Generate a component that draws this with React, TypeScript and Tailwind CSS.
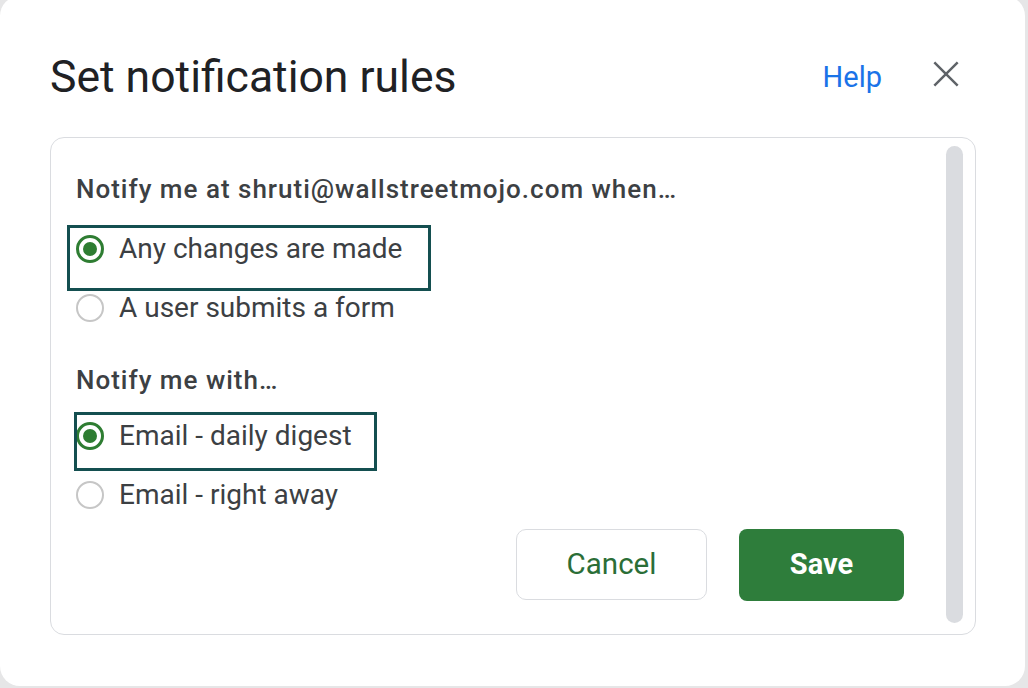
import React from "react";

function Radio({ checked }: { checked?: boolean }) {
  if (checked) {
    return (
      <span className="flex h-[28px] w-[28px] shrink-0 items-center justify-center rounded-full border-[3px] border-[#2e7d32]">
        <span className="h-[14px] w-[14px] rounded-full bg-[#2e7d32]" />
      </span>
    );
  }
  return <span className="h-[28px] w-[28px] shrink-0 rounded-full border-2 border-[#c6c6c6]" />;
}

function Option({
  label,
  checked,
  children,
}: {
  label: string;
  checked?: boolean;
  children?: React.ReactNode;
}) {
  return (
    <label className="relative flex h-[59px] items-center gap-[15px]">
      <Radio checked={checked} />
      <span className="text-[28px] leading-[40px] text-[#3c4043]">{label}</span>
      {children}
    </label>
  );
}

export default function App() {
  return (
    <div className="h-[688px] w-[1028px] overflow-hidden bg-[#e6e6e7] font-['Roboto',sans-serif]">
      <div className="-mt-[4px] h-[690px] w-[1025px] rounded-[20px] bg-white pl-[50px] pr-[49px] pt-[55px]">
        {/* Header */}
        <div className="flex items-start pr-[10px]">
          <h1 className="flex-1 text-[44.5px] font-normal leading-[52px] text-[#202124]">
            Set notification rules
          </h1>
          <a href="#" className="text-[29px] leading-[52px] text-[#1a73e8]">
            Help
          </a>
          <button className="ml-[44px] flex h-[46px] w-[40px] items-center justify-center text-[#5f6368]">
            <svg width="40" height="40" viewBox="0 0 24 24" fill="none" stroke="currentColor" strokeWidth="1.5">
              <path d="M5 5L19 19M19 5L5 19" />
            </svg>
          </button>
        </div>

        {/* Rules box */}
        <div className="mt-[34px] flex h-[498px] rounded-[14px] border border-[#dadce0]">
          <div className="flex-1 pl-[25px] pt-[36px]">
            <p className="text-[26px] font-medium leading-[30px] tracking-[1px] text-[#3c4043]">
              Notify me at shruti@wallstreetmojo.com when…
            </p>
            <div className="mt-[15px]">
              <Option label="Any changes are made" checked>
                <span className="absolute left-[-9px] top-[6px] h-[66px] w-[364px] border-[3px] border-[#144f50]" />
              </Option>
              <Option label="A user submits a form" />
            </div>

            <p className="mt-[28px] text-[26px] font-medium leading-[30px] tracking-[1px] text-[#3c4043]">
              Notify me with…
            </p>
            <div className="mt-[11px]">
              <Option label="Email - daily digest" checked>
                <span className="absolute left-[-2px] top-[6px] h-[59px] w-[303px] border-[3px] border-[#144f50]" />
              </Option>
              <Option label="Email - right away" />
            </div>

            {/* Buttons */}
            <div className="mr-[42px] mt-[5px] flex justify-end gap-[32px]">
              <button className="h-[71px] w-[191px] rounded-[10px] border-[1.5px] border-[#dadce0] text-[29.5px] text-[#2b6e37]">
                Cancel
              </button>
              <button className="h-[72px] w-[165px] rounded-[8px] bg-[#2e7d3b] text-[29px] font-bold text-white">
                Save
              </button>
            </div>
          </div>
          {/* Scrollbar */}
          <div className="mb-[11px] mr-[12px] mt-[8px] w-[17px] rounded-full bg-[#dadce0]" />
        </div>
      </div>
    </div>
  );
}
